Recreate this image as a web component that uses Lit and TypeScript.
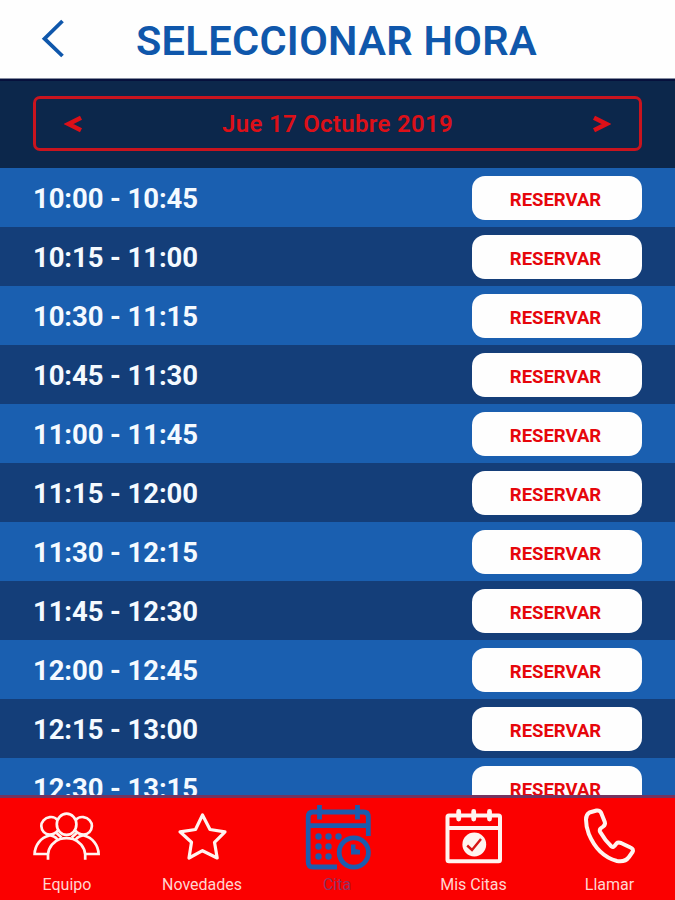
import { LitElement, html, css, svg } from "lit";
import { customElement, property, state } from "lit/decorators.js";
import { classMap } from "lit/directives/class-map.js";

const SLOTS = [
  "10:00 - 10:45",
  "10:15 - 11:00",
  "10:30 - 11:15",
  "10:45 - 11:30",
  "11:00 - 11:45",
  "11:15 - 12:00",
  "11:30 - 12:15",
  "11:45 - 12:30",
  "12:00 - 12:45",
  "12:15 - 13:00",
  "12:30 - 13:15",
];

// Tab icons share a 135x76 viewBox, the size of a tab above its label.
const ICONS: Record<string, unknown> = {
  team: svg`
    <g fill="none" stroke="currentColor" stroke-width="2.700">
      <ellipse cx="66.600" cy="26.300" rx="9.800" ry="10.600"/>
      <path d="M57.300 22C55.500 19.500 52.500 18.800 49.800 19.100C44.500 19.700 41.200 24 41.300 28C41.500 33 45 36.500 49.500 36.500C52.500 36.500 55.500 35.500 57.800 32.500"/>
      <path d="M75.900 22C77.700 19.500 80.700 18.800 83.400 19.100C88.700 19.700 92 24 91.900 28C91.700 33 88.200 36.500 83.700 36.500C80.700 36.500 77.700 35.500 75.400 32.500"/>
      <path d="M48 61.700V56.500C48.500 49 54 43 60 41Q66.500 39.300 73 41C79 43 84.700 49 85.200 56.500V61.700"/>
      <path d="M49.500 37.500C40.500 39.500 34.800 47.500 34.600 56H48M83.700 37.500C92.700 39.500 98.400 47.500 98.600 56H85"/>
      <path d="M49 37.200C53 37.800 55.500 39 57.500 41.500M84.200 37.200C80.200 37.800 77.700 39 75.700 41.500M56.500 35L61.500 39.500M76.700 35L71.700 39.500"/>
    </g>`,
  star: svg`
    <path fill="none" stroke="currentColor" stroke-width="3.200" stroke-linejoin="round"
      d="M67.500 17L75 31.500L90 33.800L79.500 44.300L82.200 60L67.500 52.700L54 60L56.500 44.300L45 33.800L60.500 31.500Z"/>`,
  booking: svg`
    <g fill="none" stroke="currentColor" stroke-width="4.800">
      <path d="M98.300 38V19Q98.300 14 93.500 14H43Q38.200 14 38.200 19V64Q38.200 69 43 69H67"/>
      <path d="M38.200 27.700H98.300"/>
      <path d="M49.500 7V21.500M87.500 7V21.500"/>
      <circle cx="83.800" cy="54.500" r="14.600"/>
    </g>
    <path fill="currentColor" d="M81 46.500H85.500V51L90 52V56.500H81Z"/>
    <g fill="currentColor">
      <circle cx="48.500" cy="38.500" r="3.200"/><circle cx="58.500" cy="38.500" r="3.200"/><circle cx="68.500" cy="38.500" r="3.200"/>
      <circle cx="48.500" cy="48.500" r="3.200"/><circle cx="58.500" cy="48.500" r="3.200"/>
      <circle cx="48.500" cy="58.500" r="3.200"/><circle cx="58.500" cy="58.500" r="3.200"/>
    </g>`,
  calendar: svg`
    <g fill="none" stroke="currentColor" stroke-width="4">
      <rect x="42.500" y="17.500" width="52.500" height="45.800" rx="1.500"/>
      <path d="M42.500 30H95"/>
      <path stroke-width="4.800" stroke-linecap="round" d="M53.700 13.500V21M68.700 13.500V21M84.500 13.500V21"/>
    </g>
    <circle cx="69.300" cy="46.500" r="11.900" fill="currentColor"/>
    <path class="check" fill="none" stroke-width="2.400" d="M62.200 47.500L67 52L76 41"/>`,
  phone: svg`
    <path fill="none" stroke="currentColor" stroke-width="4" stroke-linejoin="round"
      d="M49.500 14.500L56.500 12.500Q59.500 12 61 14.500L64.800 24Q65.600 26.500 63.200 28.500L60.500 30.500Q59.200 32 60.200 34Q65 42.500 71.500 48.500Q73.300 49.800 74.500 48L76.500 45.500Q78 44 81 45L90.500 49.500Q94 51 92.500 54L89 59Q85 64.500 77 63Q58 58 48.800 36Q46 29 46 21.500Q46 16.500 49.500 14.500Z"/>`,
};

@customElement("slot-row")
class SlotRow extends LitElement {
  @property() time = "";

  static styles = css`
    :host {
      display: flex;
      align-items: center;
      justify-content: space-between;
      height: 59px;
      flex: none;
      box-sizing: border-box;
      padding: 0 33px;
    }
    .time {
      color: #f4faff;
      font-size: 27.5px;
      font-weight: 700;
      line-height: 32px;
      letter-spacing: -0.1px;
      white-space: nowrap;
      margin-top: 2px;
    }
    .reserve {
      width: 170px;
      height: 44px;
      border: 0;
      border-radius: 13px;
      background: #fefefe;
      color: #e6060b;
      font: 700 18.5px/22px Roboto, sans-serif;
      padding: 3px 0 0;
      margin-top: 1px;
      text-indent: -3px;
    }
  `;

  render() {
    return html`<span class="time">${this.time}</span><button class="reserve">RESERVAR</button>`;
  }
}

@customElement("tab-item")
class TabItem extends LitElement {
  @property() icon = "";
  @property() label = "";
  @property({ type: Boolean }) active = false;

  static styles = css`
    :host {
      flex: 1;
      min-width: 0;
    }
    .tab {
      display: flex;
      flex-direction: column;
      align-items: center;
      color: #fff4f0;
    }
    .icon {
      width: 135px;
      height: 76px;
      display: block;
    }
    .check {
      stroke: #d81414;
    }
    .label {
      font-size: 16px;
      line-height: 22px;
      color: #ffd5d0;
      white-space: nowrap;
    }
    .team .label,
    .star .label,
    .booking .label {
      margin-right: 1px;
    }
    .calendar .label {
      margin-left: 2px;
    }
    .phone .label {
      margin-left: 4px;
    }
    .active {
      color: #1c5cae;
    }
    .active .label {
      color: #8a3567;
    }
  `;

  render() {
    return html`<div class=${classMap({ tab: true, active: this.active, [this.icon]: true })}>
      <svg class="icon" viewBox="0 0 135 76">${ICONS[this.icon]}</svg>
      <span class="label">${this.label}</span>
    </div>`;
  }
}

@customElement("app-root")
class AppRoot extends LitElement {
  @state() date = "Jue 17 Octubre 2019";

  static styles = css`
    :host {
      display: flex;
      flex-direction: column;
      height: 900px;
      overflow: hidden;
      font-family: Roboto, sans-serif;
      background: #0c274b;
    }
    .header {
      height: 79px;
      flex: none;
      box-sizing: border-box;
      display: grid;
      grid-template-columns: 105px 1fr 107px;
      align-items: center;
      background: #fefefe;
      border-bottom: 1px solid #858ca0;
    }
    .back {
      width: 105px;
      height: 78px;
      display: block;
    }
    .title {
      margin: 4px 0 0;
      color: #0f57ab;
      font-size: 41.5px;
      line-height: 48px;
      font-weight: 600;
      letter-spacing: 0.35px;
      text-align: center;
      white-space: nowrap;
    }
    .datebar {
      height: 89px;
      flex: none;
      box-sizing: border-box;
      border-top: 2px solid #06103c;
      padding: 15px 33px 0;
    }
    .picker {
      height: 55px;
      box-sizing: border-box;
      border: 3px solid #c9141e;
      border-radius: 7px;
      display: flex;
      align-items: center;
      justify-content: space-between;
      padding: 0 28px;
      color: #dc1018;
    }
    .date {
      font-size: 24px;
      line-height: 28px;
      font-weight: 600;
      letter-spacing: 0.3px;
      white-space: nowrap;
    }
    .arrow {
      width: 18px;
      height: 18px;
      display: block;
    }
    .list {
      flex: 1;
      min-height: 0;
      overflow: hidden;
      display: flex;
      flex-direction: column;
    }
    .row {
      background: #1a5fb0;
    }
    .alt {
      background: #143e79;
    }
    .tabs {
      height: 105px;
      flex: none;
      box-sizing: border-box;
      display: flex;
      background: #fb0000;
      border-top: 3px solid #733460;
    }
  `;

  render() {
    return html`
      <header class="header">
        <svg class="back" viewBox="0 0 105 78">
          <path d="M62.500 21L44.500 38.700L62.500 56" fill="none" stroke="#0f57ab" stroke-width="3.800" />
        </svg>
        <h1 class="title">SELECCIONAR HORA</h1>
      </header>
      <div class="datebar">
        <div class="picker">
          <svg class="arrow" viewBox="0 0 18 18">
            <path d="M17 2.800L4.500 9L17 15.200" fill="none" stroke="currentColor" stroke-width="4.600" />
          </svg>
          <span class="date">${this.date}</span>
          <svg class="arrow" viewBox="0 0 18 18">
            <path d="M1 2.800L13.500 9L1 15.200" fill="none" stroke="currentColor" stroke-width="4.600" />
          </svg>
        </div>
      </div>
      <main class="list">
        ${SLOTS.map(
          (time, i) => html`<slot-row class=${classMap({ row: true, alt: i % 2 === 1 })} .time=${time}></slot-row>`
        )}
      </main>
      <nav class="tabs">
        <tab-item icon="team" label="Equipo"></tab-item>
        <tab-item icon="star" label="Novedades"></tab-item>
        <tab-item icon="booking" label="Cita" active></tab-item>
        <tab-item icon="calendar" label="Mis Citas"></tab-item>
        <tab-item icon="phone" label="Llamar"></tab-item>
      </nav>
    `;
  }
}
